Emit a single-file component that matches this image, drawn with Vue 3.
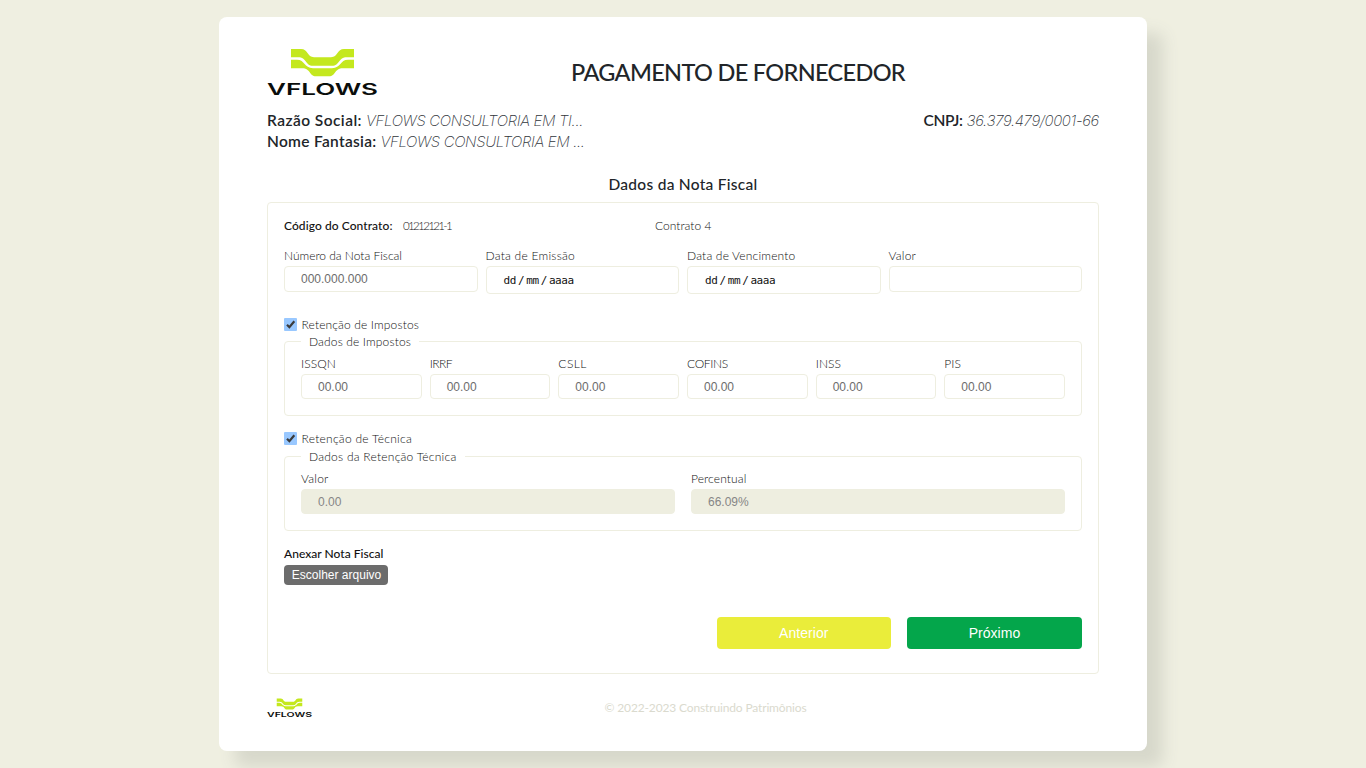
<script setup>
import { h } from 'vue'

// Tracks a label out (or in) to the given advance width.
const vFit = {
  mounted(el, { value }) {
    const natural = el.getBoundingClientRect().width
    const count = Array.from(el.textContent).length
    el.style.letterSpacing = `${(value - natural) / count}px`
  },
}

const Logo = () =>
  h('svg', { viewBox: '0 0 111 47', class: 'logo' }, [
    h('path', {
      fill: '#c4e81e',
      d: 'M24 0H34C41 0 40 8.200 47 8.200H64C71 8.200 70 0 77 0H87V8.200H80C71 8.200 73 16.700 65 16.700H46C38 16.700 40 8.200 31 8.200H24Z',
    }),
    h('path', {
      fill: '#c4e81e',
      d: 'M24 10.800H30C38 10.800 37 19.200 46 19.200H65C74 19.200 73 10.800 81 10.800H87V19.200H76C67 19.200 69 27.300 62 27.300H49C42 27.300 44 19.200 35 19.200H24Z',
    }),
    h(
      'text',
      {
        x: 0, y: 46.3, textLength: 111, lengthAdjust: 'spacingAndGlyphs',
        'font-family': 'Inter, sans-serif', 'font-size': 16, 'font-weight': 600, fill: '#0a0d0b',
      },
      'VFLOWS',
    ),
  ])

const fields = [
  { label: 'Número da Nota Fiscal', width: 118, placeholder: '000.000.000' },
  { label: 'Data de Emissão', width: 89.5, date: true },
  { label: 'Data de Vencimento', width: 108.5, date: true },
  { label: 'Valor', width: 27.5, placeholder: '' },
]
const taxes = [
  { label: 'ISSQN', width: 35 },
  { label: 'IRRF', width: 22.5 },
  { label: 'CSLL', width: 28.5 },
  { label: 'COFINS', width: 41 },
  { label: 'INSS', width: 25.5 },
  { label: 'PIS', width: 16.5 },
]
const retention = [
  { label: 'Valor', width: 27.5, value: '0.00' },
  { label: 'Percentual', width: 55.5, value: '66.09%' },
]
</script>

<template>
  <main class="page">
    <section class="card">
      <header class="header">
        <Logo />
        <h1><span v-fit="334">PAGAMENTO DE FORNECEDOR</span></h1>
      </header>

      <div class="company">
        <div>
          <p><b v-fit="95">Razão Social:</b><i v-fit="217">VFLOWS CONSULTORIA EM TI...</i></p>
          <p><b v-fit="109.5">Nome Fantasia:</b><i v-fit="204">VFLOWS CONSULTORIA EM ...</i></p>
        </div>
        <p><b v-fit="39">CNPJ:</b><i v-fit="132.5">36.379.479/0001-66</i></p>
      </div>

      <h2><span v-fit="149">Dados da Nota Fiscal</span></h2>

      <div class="panel">
        <div class="contract">
          <div><strong v-fit="108.5">Código do Contrato:</strong><span v-fit="48" class="code">01212121-1</span></div>
          <div><span v-fit="56.5">Contrato 4</span></div>
        </div>

        <div class="grid four">
          <div v-for="f in fields" :key="f.label" class="field">
            <label><span v-fit="f.width">{{ f.label }}</span></label>
            <div v-if="f.date" class="input date"><span>dd</span><span>/</span><span>mm</span><span>/</span><span>aaaa</span></div>
            <div v-else class="input">{{ f.placeholder }}</div>
          </div>
        </div>

        <div class="check first">
          <svg class="box" viewBox="0 0 13 13"><rect width="13" height="13" rx="1" fill="#99c8ff" /><path d="M3 6.700L5.400 9.200L10.300 3.200" fill="none" stroke="#3b3b3b" stroke-width="2.200" /></svg>
          <span v-fit="117.5">Retenção de Impostos</span>
        </div>
        <div class="group">
          <div class="legend"><span v-fit="102">Dados de Impostos</span></div>
          <div class="grid six">
            <div v-for="t in taxes" :key="t.label" class="field">
              <label><span v-fit="t.width">{{ t.label }}</span></label>
              <div class="input small">00.00</div>
            </div>
          </div>
        </div>

        <div class="check second">
          <svg class="box" viewBox="0 0 13 13"><rect width="13" height="13" rx="1" fill="#99c8ff" /><path d="M3 6.700L5.400 9.200L10.300 3.200" fill="none" stroke="#3b3b3b" stroke-width="2.200" /></svg>
          <span v-fit="110.5">Retenção de Técnica</span>
        </div>
        <div class="group">
          <div class="legend"><span v-fit="147.5">Dados da Retenção Técnica</span></div>
          <div class="grid two">
            <div v-for="r in retention" :key="r.label" class="field">
              <label><span v-fit="r.width">{{ r.label }}</span></label>
              <div class="input small disabled">{{ r.value }}</div>
            </div>
          </div>
        </div>

        <div class="attach"><span v-fit="99.5">Anexar Nota Fiscal</span></div>
        <button class="file"><span v-fit="89.5">Escolher arquivo</span></button>

        <div class="actions">
          <button class="previous"><span v-fit="49.5">Anterior</span></button>
          <button class="next"><span v-fit="51.5">Próximo</span></button>
        </div>
      </div>

      <footer class="footer">
        <Logo />
        <p><span v-fit="202">© 2022-2023 Construindo Patrimônios</span></p>
      </footer>
    </section>
  </main>
</template>

<style>
body {
  background: #efefe1;
  overflow: hidden;
}
</style>

<style scoped>
* {
  box-sizing: border-box;
}
.page {
  height: 768px;
  padding-top: 17px;
  overflow: hidden;
  color: #212529;
  font: 300 12px/18px Lato, sans-serif;
  white-space: nowrap;
}
.card {
  width: 928px;
  height: 734px;
  margin: 0 auto;
  padding: 32px 48px 0;
  border-radius: 8px;
  background: #fff;
  box-shadow: 16px 16px 16px #d7d8cb;
}
p, h1, h2 {
  margin: 0;
}
.logo {
  overflow: visible;
}
.header {
  display: flex;
  height: 61px;
}
.header .logo {
  width: 111px;
  height: 47px;
}
h1 {
  flex: 1;
  padding: 8px 1px 0 0;
  text-align: center;
  font-size: 23.5px;
  line-height: 30px;
  font-weight: 500;
}
.company {
  display: flex;
  justify-content: space-between;
  height: 62px;
  font-size: 16px;
  line-height: 21px;
}
.company p {
  display: flex;
  gap: 4px;
}
.company b {
  font-size: 15.5px;
  font-weight: 600;
}
.company i {
  color: #30343a;
  font-family: Inter, sans-serif;
  font-size: 15px;
  font-weight: 200;
}
h2 {
  height: 30px;
  padding-top: 2px;
  text-align: center;
  font-size: 15.5px;
  line-height: 20px;
  font-weight: 500;
}
.panel {
  height: 472px;
  padding: 14px 16px 0;
  border: 1px solid #eeeee0;
  border-radius: 4px;
  color: #111;
}
.contract {
  display: grid;
  grid-template-columns: 371px 1fr;
  height: 30px;
}
.contract strong {
  font-weight: 500;
}
.contract div {
  display: flex;
}
.code {
  margin-left: 10.5px;
  font-size: 11.5px;
}
.grid {
  display: grid;
  gap: 8px;
}
.four {
  grid-template-columns: repeat(4, 1fr);
  height: 68px;
}
.six {
  grid-template-columns: repeat(6, 1fr);
}
.two {
  grid-template-columns: repeat(2, 1fr);
  gap: 16px;
}
.field label {
  display: flex;
  height: 19px;
}
.input {
  height: 26px;
  padding-left: 16px;
  border: 1px solid #eeeee0;
  border-radius: 4px;
  color: #6c6c6c;
  font: 400 12px/24px "Liberation Sans", sans-serif;
}
.input.small {
  height: 25px;
  line-height: 24px;
}
.input.disabled {
  background: #eeeee0;
  color: #868686;
}
.input.date {
  display: flex;
  gap: 2px;
  height: 28px;
  padding-left: 17px;
  color: #111;
  font: 400 11px/27px "DejaVu Sans Mono", monospace;
  letter-spacing: -0.4px;
}
.check {
  display: flex;
  align-items: flex-start;
  gap: 4.5px;
}
.check.first {
  height: 26px;
  padding-top: 1px;
}
.check.second {
  height: 26px;
  margin-top: 14px;
}
.box {
  width: 13px;
  height: 13px;
  margin-top: 2px;
}
.group {
  height: 75px;
  padding: 0 16px;
  border: 1px solid #eeeee0;
  border-radius: 4px;
}
.legend {
  width: max-content;
  height: 22px;
  margin-top: -9px;
  padding: 0 8px;
  background: #fff;
}
.attach {
  display: flex;
  height: 20px;
  margin-top: 14px;
  font-weight: 500;
}
button {
  border: 0;
  border-radius: 4px;
  padding: 0;
  color: #fff;
  font: 400 14px/20px "Liberation Sans", sans-serif;
}
.file {
  display: block;
  width: 104px;
  height: 20px;
  padding-left: 1px;
  background: #6c6c6c;
  font-size: 12px;
}
.actions {
  display: flex;
  justify-content: flex-end;
  gap: 16px;
  margin-top: 32px;
}
.actions button {
  width: 174.5px;
  height: 32px;
}
.actions .next {
  width: 175px;
}
.previous {
  background: #eaed3a;
}
.next {
  background: #04a64b;
}
.footer {
  display: flex;
  padding-top: 24px;
}
.footer .logo {
  width: 45px;
  height: 20px;
}
.footer p {
  flex: 1;
  padding-top: 1px;
  text-align: center;
  color: #dadace;
  font-weight: 400;
}
</style>
